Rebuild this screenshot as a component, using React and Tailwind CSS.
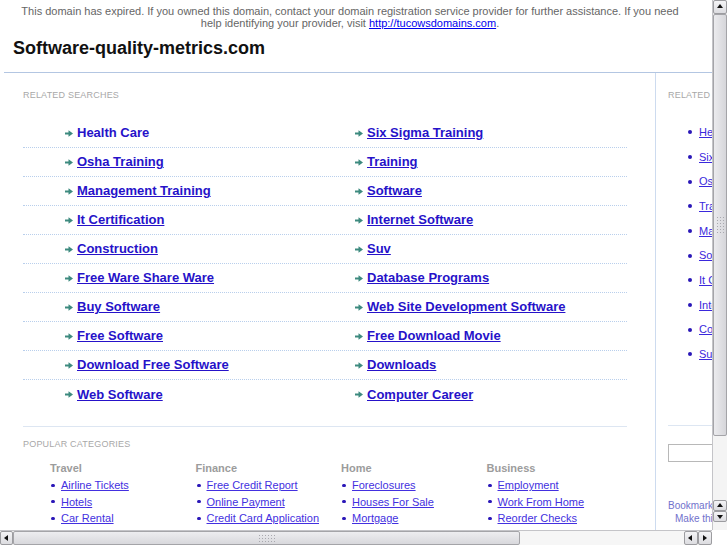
import React from 'react';

const searches = [
    ['Health Care', 'Six Sigma Training'],
    ['Osha Training', 'Training'],
    ['Management Training', 'Software'],
    ['It Certification', 'Internet Software'],
    ['Construction', 'Suv'],
    ['Free Ware Share Ware', 'Database Programs'],
    ['Buy Software', 'Web Site Development Software'],
    ['Free Software', 'Free Download Movie'],
    ['Download Free Software', 'Downloads'],
    ['Web Software', 'Computer Career'],
];

const side = [
    'Health Care', 'Six Sigma Training', 'Osha Training', 'Training', 'Management Training',
    'Software', 'It Certification', 'Internet Software', 'Construction', 'Suv',
];

const categories = [
    { title: 'Travel', links: ['Airline Tickets', 'Hotels', 'Car Rental'] },
    { title: 'Finance', links: ['Free Credit Report', 'Online Payment', 'Credit Card Application'] },
    { title: 'Home', links: ['Foreclosures', 'Houses For Sale', 'Mortgage'] },
    { title: 'Business', links: ['Employment', 'Work From Home', 'Reorder Checks'] },
];

const Arrow = () => (
    <svg width="8" height="7" viewBox="0 0 8 7" className="shrink-0">
        <rect x="0" y="2.5" width="4.5" height="2" fill="#3d8a7f" />
        <path d="M3.5 0.3 L8 3.5 L3.5 6.7 Z" fill="#3d8a7f" />
    </svg>
);

const Tri = ({ dir }) => {
    const d = {
        up: 'M1 5 L4 1 L7 5 Z',
        down: 'M1 2 L4 6 L7 2 Z',
        left: 'M5 1 L1 4 L5 7 Z',
        right: 'M2 1 L6 4 L2 7 Z',
    }[dir];
    return (
        <svg width="8" height="8" viewBox="0 0 8 8">
            <path d={d} fill="#111" />
        </svg>
    );
};

const Btn = ({ dir, className }) => (
    <div className={`flex items-center justify-center border border-[#9c9ca0] bg-gradient-to-b from-[#f4f4f6] to-[#dcdce0] rounded-[2px] ${className}`}>
        <Tri dir={dir} />
    </div>
);

const Grip = ({ vertical }) => (
    <div className={`grid gap-[2px] ${vertical ? 'grid-cols-3' : 'grid-cols-6'}`}>
        {Array.from({ length: 18 }).map((_, i) => (
            <div key={i} className="w-[1px] h-[1px] bg-[#a8a8ae]" />
        ))}
    </div>
);

const SectionLabel = ({ children }) => (
    <div className="text-[9px] leading-[11px] tracking-[0.2px] text-[#a8a8a8] uppercase">{children}</div>
);

export default function App() {
    return (
        <div className="w-[727px] h-[545px] overflow-hidden flex flex-col bg-white font-['Liberation_Sans',Arial,sans-serif]">
            <div className="flex flex-1 min-h-0">
                {/* page */}
                <div className="w-[712px] overflow-hidden">
                    <div className="w-[1100px]">
                        <div className="w-[680px] ml-[10px] pt-[5px] text-center text-[11px] leading-[12px] text-[#666]">
                            This domain has expired. If you owned this domain, contact your domain registration service provider for further assistance. If you need help identifying your provider, visit{' '}
                            <a className="text-[#0000ee] underline">http://tucowsdomains.com</a>.
                        </div>
                        <h1 className="mt-[9px] pl-[13px] text-[18px] leading-[21px] font-bold text-[#111]">
                            Software-quality-metrics.com
                        </h1>
                        <div className="mt-[13px] ml-[4px] border-t border-[#b3c6e2] flex">
                            {/* left panel */}
                            <div className="w-[652px] border-r border-[#cddbef] pl-[19px] pb-[20px]">
                                <div className="pt-[17px]">
                                    <SectionLabel>Related Searches</SectionLabel>
                                </div>
                                <div className="mt-[18px] w-[604px]">
                                    {searches.map((row, i) => (
                                        <div
                                            key={i}
                                            className={`flex h-[29px] items-center ${i < searches.length - 1 ? 'border-b border-dotted border-[#b9cfec]' : ''}`}
                                        >
                                            {row.map((item, j) => (
                                                <div key={j} className={`flex items-center gap-[4px] ${j === 0 ? 'w-[290px] pl-[42px]' : 'pl-[42px]'}`}>
                                                    <Arrow />
                                                    <a className={`text-[13px] font-bold text-[#2612c9] ${i === 0 && j === 0 ? '' : 'underline'}`}>
                                                        {item}
                                                    </a>
                                                </div>
                                            ))}
                                        </div>
                                    ))}
                                </div>
                                <div className="mt-[17px] w-[604px] border-t border-[#dde6f2] pt-[12px]">
                                    <SectionLabel>Popular Categories</SectionLabel>
                                </div>
                                <div className="mt-[10px] ml-[27px] flex">
                                    {categories.map((cat) => (
                                        <div key={cat.title} className="w-[145.5px]">
                                            <div className="text-[11px] leading-[16px] font-bold text-[#9c9c9c]">{cat.title}</div>
                                            <ul className="mt-[1px]">
                                                {cat.links.map((l) => (
                                                    <li key={l} className="flex items-center h-[16.5px] gap-[6px]">
                                                        <span className="w-[4px] h-[3px] rounded-full bg-[#2a17b8] ml-[1px]" />
                                                        <a className="text-[11px] text-[#4330e0] underline">{l}</a>
                                                    </li>
                                                ))}
                                            </ul>
                                        </div>
                                    ))}
                                </div>
                            </div>
                            {/* right panel */}
                            <div className="w-[260px] pl-[12px]">
                                <div className="pt-[17px]">
                                    <SectionLabel>Related Searches</SectionLabel>
                                </div>
                                <ul className="mt-[19px] pl-[20px]">
                                    {side.map((s) => (
                                        <li key={s} className="flex items-center h-[24.67px] gap-[7px]">
                                            <span className="w-[4px] h-[4px] rounded-full bg-[#2a17b8]" />
                                            <a className="text-[11px] text-[#3a28dc] underline">{s}</a>
                                        </li>
                                    ))}
                                </ul>
                                <div className="mt-[58px] border-t border-[#dde6f2]" />
                                <input className="mt-[18px] block w-[200px] h-[18px] border border-[#b8b8b8]" />
                                <div className="mt-[37px] text-[10px] leading-[13px] text-[#7171cc]">Bookmark this page</div>
                                <div className="pl-[7px] text-[10px] leading-[13px] text-[#7171cc]">Make this your homepage</div>
                            </div>
                        </div>
                    </div>
                </div>
                {/* vertical scrollbar */}
                <div className="w-[15px] flex flex-col bg-[#ececee] border-l border-[#c4c4c8]">
                    <Btn dir="up" className="h-[14px]" />
                    <div className="h-[422px] border border-[#a4a4a8] rounded-[2px] bg-gradient-to-r from-[#ebebee] to-[#d6d6da] flex items-center justify-center">
                        <Grip vertical />
                    </div>
                    <div className="flex-1 bg-[#f4f4f4]" />
                    <Btn dir="up" className="h-[11px]" />
                    <Btn dir="down" className="h-[11px]" />
                    <div className="h-[8px] bg-[#f4f4f4]" />
                </div>
            </div>
            {/* horizontal scrollbar */}
            <div className="h-[15px] flex">
                <div className="w-[712px] flex bg-[#f2f2f2] border-t border-[#c4c4c8]">
                    <Btn dir="left" className="w-[13px]" />
                    <div className="w-[507px] border border-[#a4a4a8] rounded-[2px] bg-gradient-to-b from-[#ededf0] to-[#d8d8dc] flex items-center justify-center">
                        <Grip />
                    </div>
                    <div className="flex-1 bg-[#f6f6f6]" />
                    <Btn dir="left" className="w-[14px]" />
                    <Btn dir="right" className="w-[14px]" />
                </div>
                <div className="w-[15px] bg-white" />
            </div>
        </div>
    );
}
